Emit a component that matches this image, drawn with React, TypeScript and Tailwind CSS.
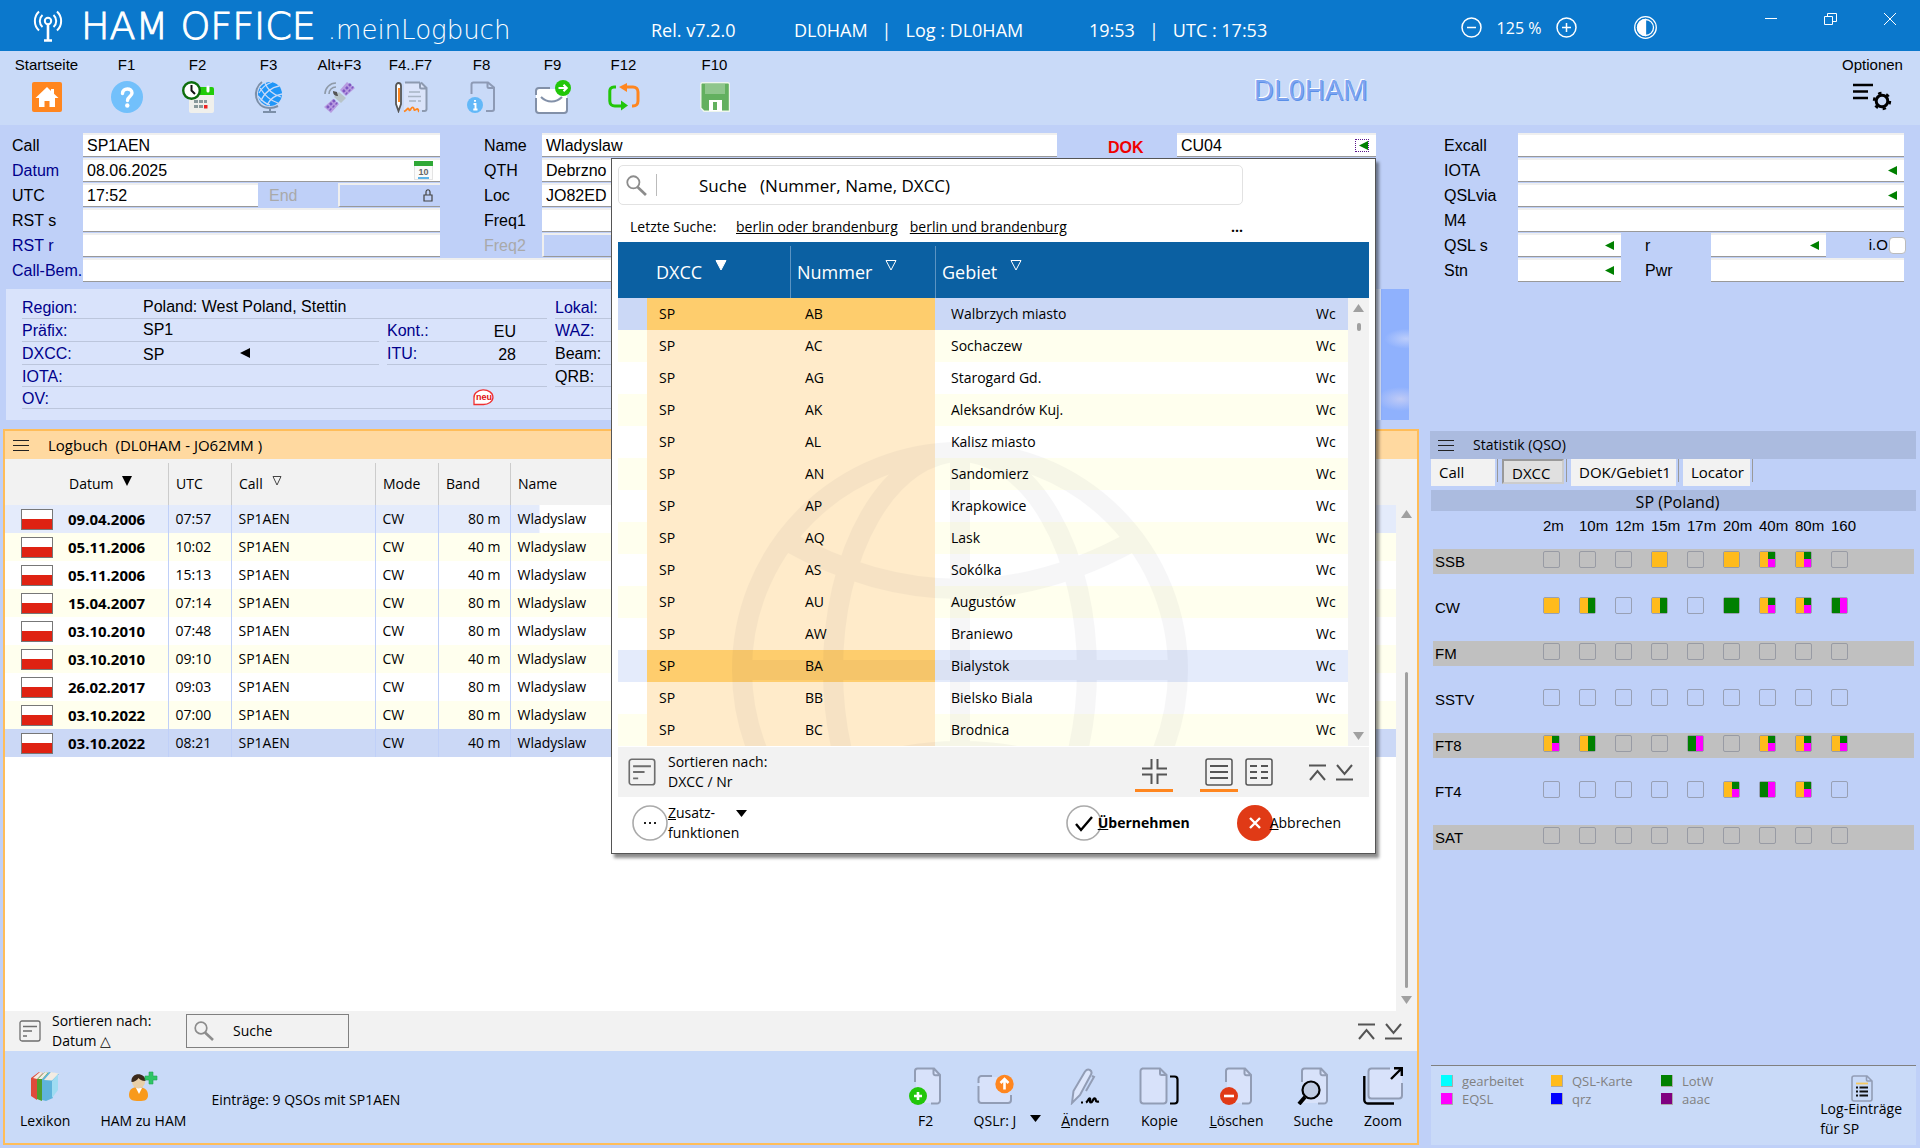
import React from "react";
import clsx from "clsx";

const UI_FONT = "font-['Open_Sans',sans-serif]";
const FORM_FONT = "font-['Liberation_Sans',sans-serif]";

/* ---------- icons ---------- */

function AntennaIcon() {
  return (
    <svg width="30" height="32" viewBox="0 0 30 32" fill="none" stroke="#fff" strokeWidth="2">
      <circle cx="15" cy="11" r="3.2" />
      <path d="M15 14v16M11 30.5h8" strokeWidth="2.6" />
      <path d="M9.5 17a8 8 0 010-12M20.500 17a8 8 0 000-12M6 20.500a13 13 0 010-19M24 20.500a13 13 0 000-19" />
    </svg>
  );
}

function HomeIcon() {
  return (
    <svg width="32" height="32" viewBox="0 0 32 32">
      <rect x="1" y="1" width="30" height="30" rx="2" fill="#ff861f" />
      <path d="M16 6L4.500 17h3.500v9h5.500v-6h5v6H24v-9h3.500L23 12.700V8h-3v2z" fill="#fff" />
    </svg>
  );
}

function HelpIcon() {
  return (
    <svg width="32" height="32" viewBox="0 0 32 32">
      <circle cx="16" cy="16" r="16" fill="#72c0fb" />
      <path d="M11.500 12.500c0-6 9.500-6 9.500-.5 0 3.500-4.500 3.500-4.500 7.500" fill="none" stroke="#fff" strokeWidth="3.400" strokeLinecap="round" />
      <circle cx="16.300" cy="24.500" r="2.200" fill="#fff" />
    </svg>
  );
}

function CalendarClockIcon() {
  return (
    <svg width="32" height="32" viewBox="0 0 32 32">
      <rect x="7" y="12" width="25" height="20" rx="2" fill="#f0f0ec" />
      <path d="M14 6h16a2 2 0 012 2v6H14z" fill="#22cc0a" />
      <path d="M26 6v4" stroke="#fff" strokeWidth="3" strokeLinecap="round" />
      <g fill="#8a9a9c">
        <path d="M12 19h4v3h-4zM17 19h4v3h-4zM22 19h3v3h-3zM12 24h4v3h-4zM17 24h4v3h-4z" />
      </g>
      <path d="M22 24h3.500v3.500H22z" fill="#ee2222" />
      <circle cx="9.500" cy="9.500" r="8.300" fill="#fff" stroke="#0d6e0d" strokeWidth="2.400" />
      <path d="M9.500 4v5.500l3.500 3.500" stroke="#111" strokeWidth="2" fill="none" />
    </svg>
  );
}

function GlobeIcon() {
  return (
    <svg width="30" height="32" viewBox="0 0 30 32" fill="none">
      <circle cx="16" cy="13" r="12" fill="#2096f8" />
      <path d="M6 7c5 8 11 13 18 15M11 2c3 8 9 12 16 14M4 15c4 5 8 8 12 9M25 5C18 6 10 12 7 20M28 13c-6 1-12 5-15 11M18 1C13 3 8 6 5 12" stroke="#c9daf8" strokeWidth="1.300" />
      <path d="M8 1C-2 8 0 27 16 27c4 0 6-1 8-2M16 27v3M9 31h13" stroke="#7c8fa8" strokeWidth="2" />
    </svg>
  );
}

function SatelliteIcon() {
  return (
    <svg width="34" height="32" viewBox="0 0 34 32">
      <path d="M24 1l8 6-9 8-6-6zM10 18l6 5-8 9-7-6z" fill="#b79be0" />
      <path d="M20 9l4 4M23 6l4 4M26 3l4 4M4 25l4 4M7 22l4 4M10 19l4 4" stroke="#7e57c2" strokeWidth="2.600" strokeDasharray="2.600 1.600" />
      <path d="M16 11l7 6-5 5-7-6z" fill="#b8c4c8" />
      <path d="M10 10c0 4 2 5 5 5l-1-4z" fill="#555" />
      <path d="M2 13C2 7 7 2 13 2M6 13c0-4 3-7 7-7" stroke="#8f9aa8" strokeWidth="1.600" fill="none" />
    </svg>
  );
}

function ContractIcon() {
  return (
    <svg width="34" height="32" viewBox="0 0 34 32" fill="none">
      <path d="M10 2h17l6 6v21H10z" fill="#dbe4fa" />
      <path d="M11 1.500h15M27 1.500l5.500 5.500v21a2 2 0 01-2 2H28M26 1.500V6a1.500 1.500 0 001.500 1.500h5" stroke="#8d9ab0" strokeWidth="2" />
      <path d="M15 11h11M14 15.500h13M15 20h7M24 20h3" stroke="#a8b4c4" strokeWidth="1.600" />
      <path d="M2 5c0-4 5-4 5 0v18l-2.500 7L2 23z" fill="#fff" stroke="#555" strokeWidth="1.800" />
      <path d="M5 7v14" stroke="#ff861f" strokeWidth="2" />
      <path d="M10 30.500c3-1 4-5 5-2s2-3 4-2 0 4 3 2 2 2 3 2" stroke="#ff861f" strokeWidth="1.800" />
    </svg>
  );
}

function DocShape({ children }: { children?: React.ReactNode }) {
  return (
    <svg width="34" height="38" viewBox="0 0 34 38" fill="none">
      <path d="M7 2h18l6 7v27H7z" fill="#d8e2fa" />
      <path d="M6 15V4a2.500 2.500 0 012.500-2.500H25l6 6.500v25.500a3 3 0 01-3 3h-6M24.500 2v4.500A1.800 1.800 0 0026.300 8.300H31" stroke="#929db5" strokeWidth="2" />
      {children}
    </svg>
  );
}

function InfoDocIcon() {
  return (
    <svg width="30" height="32" viewBox="0 0 30 32" fill="none">
      <path d="M4.500 13V3.500a2 2 0 012-2H21l6 5v21.500a2 2 0 01-2 2h-6M20.500 2v3.500A1.500 1.500 0 0022 7h5" stroke="#8d9ab5" strokeWidth="2" />
      <circle cx="8" cy="24" r="8" fill="#62b8f8" />
      <path d="M8 19v1.800M6.500 23H8.500v5.500M6.300 28.500h4.200" stroke="#fff" strokeWidth="1.900" />
    </svg>
  );
}

function MailIcon() {
  return (
    <svg width="38" height="34" viewBox="0 0 38 34" fill="none">
      <rect x="2" y="9" width="31" height="24" rx="3" fill="#fff" />
      <path d="M2 15v-4a3 3 0 013-3h11M2 18v12a3 3 0 003 3h25a3 3 0 003-3V18" stroke="#8290a8" strokeWidth="2" />
      <path d="M7 17c6 6 15 6 21 0" stroke="#8290a8" strokeWidth="2" />
      <circle cx="29" cy="8" r="8" fill="#22c60a" />
      <path d="M24.500 8h8M29.500 4.800L32.800 8l-3.300 3.200" stroke="#fff" strokeWidth="2" />
    </svg>
  );
}

function SyncIcon() {
  return (
    <svg width="32" height="28" viewBox="0 0 32 28" fill="none" strokeWidth="3">
      <path d="M8 4H6C3 4 1.800 6 1.800 8v10c0 3 2 5 5 5h8" stroke="#22c60a" />
      <path d="M24 23h1c3 0 5-2 5-5V9c0-3-2-5-5-5h-8" stroke="#ff861f" />
      <path d="M13 17.500v10l7-5z" fill="#22c60a" />
      <path d="M19 0v9l-8-5z" fill="#ff861f" />
    </svg>
  );
}

function SaveIcon() {
  return (
    <svg width="30" height="30" viewBox="0 0 30 30">
      <path d="M2 .8h26a1.500 1.500 0 011.500 1.500v27H4L.8 26V2.300A1.500 1.500 0 012 .8z" fill="#63b05f" stroke="#eef6ee" strokeWidth="1.400" />
      <path d="M5 2h20v10H5z" fill="#8fc68c" />
      <path d="M9 18h13v11H9z" fill="#fff" />
      <path d="M13 20h4v8h-4z" fill="#63b05f" />
    </svg>
  );
}

function OptionsIcon() {
  return (
    <svg width="42" height="30" viewBox="0 0 42 30" fill="none" stroke="#000">
      <path d="M1 3h20M1 9.500h15M1 16h15" strokeWidth="2.400" />
      <circle cx="30" cy="19" r="5.800" strokeWidth="3" />
      <circle cx="30" cy="19" r="8" strokeWidth="2.400" strokeDasharray="3.400 4.980" />
    </svg>
  );
}

function SearchIcon({ size = 20 }: { size?: number }) {
  return (
    <svg width={size} height={size} viewBox="0 0 20 20" fill="none" stroke="#8c8c8c">
      <circle cx="7" cy="7" r="5.800" strokeWidth="1.700" />
      <path d="M11 11.500l8 7.500" strokeWidth="2.600" />
    </svg>
  );
}

function SortIcon({ size = 22 }: { size?: number }) {
  return (
    <svg width={size} height={size} viewBox="0 0 22 22" fill="none" stroke="#6e6e6e" strokeWidth="1.300">
      <rect x="1" y="1" width="20" height="20" rx="2" />
      <path d="M4 6.500h14M4 11h9M4 16h4" strokeWidth="1.500" />
    </svg>
  );
}

function ToTopIcon() {
  return (
    <svg width="17" height="17" viewBox="0 0 17 17" fill="none" stroke="#555" strokeWidth="2">
      <path d="M0 1.500h17M1 16l7.500-9L16 16" />
    </svg>
  );
}

function ToBottomIcon() {
  return (
    <svg width="17" height="17" viewBox="0 0 17 17" fill="none" stroke="#555" strokeWidth="2">
      <path d="M0 15.500h17M1 1l7.500 9L16 1" />
    </svg>
  );
}

function Hamburger() {
  return (
    <svg width="16" height="11" viewBox="0 0 16 11" stroke="#222" strokeWidth="1">
      <path d="M0 .5h16M0 5.500h16M0 10.500h16" />
    </svg>
  );
}

function GreenArrow() {
  return (
    <svg width="9" height="9" viewBox="0 0 9 9">
      <path d="M9 0v9L0 4.500z" fill="#008000" />
    </svg>
  );
}

function BooksIcon() {
  return (
    <svg width="30" height="30" viewBox="0 0 30 30">
      <path d="M1 7l8-6 4 1-6 6v21l-6-4z" fill="#e04a3a" />
      <path d="M7 8l8-7 4 1-7 6v22l-5-2z" fill="#4f9e2f" />
      <path d="M12 8l7-7 10 2-6 7v17l-7 3-4-1z" fill="#5fb4dc" />
      <path d="M3 7l7-6 3 .5-6 6.500zM8 8l7-7 3 .5-6 6.500zM14 9l7-8 8 1.500-7 7z" fill="#f2ebe2" />
      <path d="M22 10l6-7v16l-6 8z" fill="#9fdcf2" />
    </svg>
  );
}

function UserAddIcon() {
  return (
    <svg width="30" height="30" viewBox="0 0 30 30">
      <path d="M1 24c0-6 4-8 9-8s10 2 10 8c0 5-3 6-9 6S1 29 1 24z" fill="#f89a1c" />
      <path d="M8 17l3 6 3-6z" fill="#fff" />
      <circle cx="10.500" cy="11" r="6.500" fill="#e8cfa8" />
      <path d="M3.500 11c-1-10 14-10 14-1-4 0-6-2-7-3-1 2-4 4-7 4z" fill="#3b2a1c" />
      <path d="M21 1h4v4h4v4h-4v4h-4V9h-4V5h4z" fill="#2fc565" stroke="#22a552" strokeWidth=".6" />
    </svg>
  );
}

function QslIcon() {
  return (
    <svg width="38" height="38" viewBox="0 0 38 38" fill="none">
      <rect x="3" y="10" width="31" height="26" rx="2" fill="#d8e2fa" />
      <path d="M2.500 16v-4a3 3 0 013-3H16M2.500 19v14a3 3 0 003 3H32a3 3 0 003-3v-5" stroke="#929db5" strokeWidth="2" />
      <circle cx="28.500" cy="17" r="9.200" fill="#ff861f" />
      <path d="M28.500 22.500V12.500M24.500 16l4-4 4 4" stroke="#fff" strokeWidth="2.600" />
    </svg>
  );
}

function PenIcon() {
  return (
    <svg width="32" height="38" viewBox="0 0 32 38" fill="none">
      <path d="M3 36l1.500-12L16 4.500c3-4 8-1 6 3L11 28z" fill="#dde6fb" stroke="#929db5" strokeWidth="2" />
      <path d="M23 9l2 1-8 14" stroke="#929db5" strokeWidth="2" />
      <path d="M12 35.500h2M17 35.500c2-1 3-5 4-4s-1 4 1 4 2-5 4-4-1 4 4 3" stroke="#000" strokeWidth="2.200" />
    </svg>
  );
}

function CopyIcon() {
  return (
    <svg width="40" height="38" viewBox="0 0 40 38" fill="none">
      <path d="M3 1.500h18l6.500 6.500v25.500a3 3 0 01-3 3h-20a3 3 0 01-3-3V4A2.500 2.500 0 014 1.500zM21 2v4.500A1.500 1.500 0 0022.500 8h5" fill="#d8e2fa" stroke="#929db5" strokeWidth="2" />
      <path d="M31 9.500h4.500a3 3 0 013 3v21a3 3 0 01-3 3H31" stroke="#000" strokeWidth="2.200" />
    </svg>
  );
}

function ZoomWindowIcon() {
  return (
    <svg width="40" height="38" viewBox="0 0 40 38" fill="none">
      <rect x="6" y="2" width="33" height="30" rx="3" fill="#d8e2fa" />
      <path d="M27 1.500H8.500a3 3 0 00-3 3v24a3 3 0 003 3H36a3 3 0 003-3V16" stroke="#929db5" strokeWidth="2" />
      <path d="M1.300 9v24a3.500 3.500 0 003.500 3.500H31M28 12L38.500 1.500M31 1.300h7.800V9" stroke="#000" strokeWidth="2.400" />
    </svg>
  );
}

/* ---------- title bar ---------- */

function TitleBar() {
  return (
    <header className="flex h-[51px] shrink-0 items-center bg-[#0b78cc] pl-[33px] text-white">
      <AntennaIcon />
      <h1 className="ml-[18px] flex w-[570px] items-baseline whitespace-nowrap pt-[4px] font-['DejaVu_Sans',sans-serif] font-extralight">
        <span className="text-[38px] leading-[40px] [-webkit-text-stroke:1px_#ffffff]">HAM OFFICE</span>
        <span className="ml-[12px] text-[26px] leading-[40px]">.meinLogbuch</span>
      </h1>
      <div className="flex flex-1 items-center whitespace-pre pt-[8px] text-[18px] leading-6">
        <span className="w-[143px]">Rel. v7.2.0</span>
        <span className="w-[295px]">DL0HAM   |   Log : DL0HAM</span>
        <span>19:53   |   UTC : 17:53</span>
      </div>
      <div className="flex items-center pt-[4px]">
        <button type="button" aria-label="Verkleinern">
          <svg width="21" height="21" viewBox="0 0 21 21" fill="none" stroke="#fff" strokeWidth="1.500">
            <circle cx="10.500" cy="10.500" r="9.500" />
            <path d="M6 10.500h9" />
          </svg>
        </button>
        <span className="w-[74px] text-center text-[16px] leading-5">125 %</span>
        <button type="button" aria-label="Vergrößern">
          <svg width="21" height="21" viewBox="0 0 21 21" fill="none" stroke="#fff" strokeWidth="1.500">
            <circle cx="10.500" cy="10.500" r="9.500" />
            <path d="M6 10.500h9M10.500 6v9" />
          </svg>
        </button>
        <button type="button" aria-label="Kontrast" className="ml-[57px]">
          <svg width="23" height="23" viewBox="0 0 23 23" fill="none" stroke="#fff" strokeWidth="1.300">
            <circle cx="11.500" cy="11.500" r="10.800" />
            <circle cx="11.500" cy="11.500" r="8" />
            <path d="M11.500 3.500a8 8 0 000 16z" fill="#fff" />
          </svg>
        </button>
      </div>
      <div className="ml-[108px] flex w-[155px] items-start gap-[47px] self-start pt-[13px]">
        <button type="button" aria-label="Minimieren">
          <svg width="12" height="12" viewBox="0 0 12 12" stroke="#fff"><path d="M0 5.500h12" /></svg>
        </button>
        <button type="button" aria-label="Fenster">
          <svg width="13" height="12" viewBox="0 0 13 12" fill="none" stroke="#fff">
            <path d="M.5 3.500h8v8h-8zM3.500 3.500v-3h9v8H8.500" />
          </svg>
        </button>
        <button type="button" aria-label="Schließen">
          <svg width="12" height="12" viewBox="0 0 12 12" stroke="#fff"><path d="M0 0l12 12M12 0L0 12" /></svg>
        </button>
      </div>
    </header>
  );
}

/* ---------- toolbar ---------- */

const TOOLS = [
  { label: "F1", icon: <HelpIcon /> },
  { label: "F2", icon: <CalendarClockIcon /> },
  { label: "F3", icon: <GlobeIcon /> },
  { label: "Alt+F3", icon: <SatelliteIcon /> },
  { label: "F4..F7", icon: <ContractIcon /> },
  { label: "F8", icon: <InfoDocIcon /> },
  { label: "F9", icon: <MailIcon /> },
  { label: "F12", icon: <SyncIcon /> },
];

function Tool({ label, children }: { label: string; children: React.ReactNode }) {
  return (
    <button type="button" className="flex w-[71px] flex-col items-center">
      <span className="text-[15px] leading-[18px]">{label}</span>
      <span className="mt-[5px] flex h-[36px] items-center">{children}</span>
    </button>
  );
}

function Toolbar() {
  return (
    <nav className={clsx("flex h-[74px] shrink-0 items-start bg-[#c9daf8] pl-[11px] pr-[12px] pt-[5px]", FORM_FONT)}>
      <Tool label="Startseite"><HomeIcon /></Tool>
      <div className="ml-[9px] flex">
        {TOOLS.map((t) => (
          <Tool key={t.label} label={t.label}>{t.icon}</Tool>
        ))}
      </div>
      <div className="ml-[20px]">
        <Tool label="F10"><SaveIcon /></Tool>
      </div>
      <div className={clsx("flex flex-1 justify-end pr-[469px] pt-[11px] text-[28px] leading-[44px] text-[#7da4f0] [text-shadow:-1px_-1px_0_#ffffff,1px_1px_0_#5b8fe8]", UI_FONT)}>
        DL0HAM
      </div>
      <Tool label="Optionen"><OptionsIcon /></Tool>
    </nav>
  );
}

/* ---------- QSO form ---------- */

interface FieldProps {
  id: string;
  value?: string;
  arrow?: boolean;
  focused?: boolean;
  disabled?: boolean;
  className?: string;
  children?: React.ReactNode;
}

function Field({ id, value = "", arrow, focused, disabled, className, children }: FieldProps) {
  return (
    <div
      className={clsx(
        "flex h-[24px] items-center border-b border-t-2 border-b-[#999] border-t-[#efefef] pl-[4px] pr-[7px]",
        disabled ? "border-l-2 border-l-[#efefef] bg-[#bfd0f8]" : "bg-white",
        className
      )}
    >
      <input
        id={id}
        defaultValue={value}
        disabled={disabled}
        className="h-[20px] w-0 min-w-0 flex-1 bg-transparent text-[16px] leading-5 outline-none"
      />
      {arrow && (
        <button
          type="button"
          aria-label="Auswahl"
          className={clsx("flex h-[13px] w-[14px] items-center justify-end", focused && "border border-dotted border-purple-900")}
        >
          <GreenArrow />
        </button>
      )}
      {children}
    </div>
  );
}

function Label({ htmlFor, className, children }: { htmlFor: string; className?: string; children: React.ReactNode }) {
  return (
    <label htmlFor={htmlFor} className={clsx("whitespace-nowrap text-[16px] leading-[25px]", className)}>
      {children}
    </label>
  );
}

function QsoForm() {
  return (
    <form className={clsx("flex shrink-0 pt-[8px]", FORM_FONT)}>
      <div className="grid flex-1 grid-cols-[71px_357px_102px_1fr_120px_199px] grid-rows-[repeat(6,24px)] gap-y-px pl-[12px]">
        <Label htmlFor="call">Call</Label>
        <Field id="call" value="SP1AEN" />
        <Label htmlFor="name" className="pl-[44px]">Name</Label>
        <Field id="name" value="Wladyslaw" />
        <Label htmlFor="dok" className="pl-[51px] pt-[2px] font-bold text-[#f00000]">DOK</Label>
        <Field id="dok" value="CU04" arrow focused />

        <Label htmlFor="datum" className="text-[#00008b]">Datum</Label>
        <Field id="datum" value="08.06.2025">
          <svg width="19" height="19" viewBox="0 0 19 19">
            <rect x=".5" y=".5" width="18" height="18" fill="#fbfbfb" stroke="#e4e4e4" />
            <path d="M0 0h19v5H0z" fill="#2fa836" />
            <path d="M4 17h11" stroke="#2a9de0" strokeWidth="1.500" />
            <text x="9.500" y="14" fontSize="9" fontWeight="bold" textAnchor="middle" fill="#666">10</text>
          </svg>
        </Field>
        <Label htmlFor="qth" className="pl-[44px]">QTH</Label>
        <Field id="qth" value="Debrzno" />
        <span className="col-span-2" />

        <Label htmlFor="utc">UTC</Label>
        <div className="flex">
          <Field id="utc" value="17:52" className="w-[175px]" />
          <Label htmlFor="end" className="flex-1 pl-[11px] text-[#a9a9a9]">End</Label>
          <Field id="end" disabled className="w-[102px]">
            <svg width="10" height="13" viewBox="0 0 10 13" fill="none" stroke="#444" strokeWidth="1.200">
              <path d="M1 6h8v6H1zM3 6V3c0-3 4-3 4 0v3" />
            </svg>
          </Field>
        </div>
        <Label htmlFor="loc" className="pl-[44px]">Loc</Label>
        <Field id="loc" value="JO82ED" />
        <span className="col-span-2" />

        <Label htmlFor="rsts">RST s</Label>
        <Field id="rsts" />
        <Label htmlFor="freq1" className="pl-[44px]">Freq1</Label>
        <Field id="freq1" />
        <span className="col-span-2" />

        <Label htmlFor="rstr" className="text-[#00008b]">RST r</Label>
        <Field id="rstr" />
        <Label htmlFor="freq2" className="pl-[44px] text-[#a9a9a9]">Freq2</Label>
        <Field id="freq2" disabled />
        <span className="col-span-2" />

        <Label htmlFor="bem" className="text-[#00008b]">Call-Bem.</Label>
        <Field id="bem" className="col-span-5" />
      </div>

      <div className="grid w-[544px] grid-cols-[74px_103px_24px_66px_1fr_78px] grid-rows-[repeat(6,24px)] gap-y-px pl-[68px] pr-[16px]">
        <Label htmlFor="excall">Excall</Label>
        <Field id="excall" className="col-span-5" />
        <Label htmlFor="iota">IOTA</Label>
        <Field id="iota" arrow className="col-span-5" />
        <Label htmlFor="qslvia">QSLvia</Label>
        <Field id="qslvia" arrow className="col-span-5" />
        <Label htmlFor="m4">M4</Label>
        <Field id="m4" className="col-span-5" />
        <Label htmlFor="qsls">QSL s</Label>
        <Field id="qsls" arrow />
        <Label htmlFor="qslr" className="col-start-4">r</Label>
        <Field id="qslr" arrow />
        <div className="flex items-center justify-end">
          <label htmlFor="io" className="text-[15px] leading-5">i.O.</label>
          <input id="io" type="checkbox" className="-ml-[3px] -mr-[2px] h-[17px] w-[17px] appearance-none rounded-[4px] border border-[#bbb] bg-white" />
        </div>
        <Label htmlFor="stn">Stn</Label>
        <Field id="stn" arrow />
        <Label htmlFor="pwr" className="col-start-4">Pwr</Label>
        <Field id="pwr" className="col-span-2" />
      </div>
    </form>
  );
}

/* ---------- region info ---------- */

function InfoCell({ label, value, dark, tall, end, className, children }: {
  label: string;
  value?: string;
  dark?: boolean;
  tall?: boolean;
  end?: boolean;
  className?: string;
  children?: React.ReactNode;
}) {
  return (
    <div className={clsx("flex items-center border-b border-[#bcc6dc]", tall ? "h-[23px]" : "h-[22px]", className)}>
      <dt className={clsx("w-[121px] shrink-0 pt-[2px]", dark ? "text-black" : "text-[#00008b]")}>{label}</dt>
      {value && <dd className={clsx(end && "-ml-[121px] flex-1 pr-[31px] pt-[4px] text-right")}>{value}</dd>}
      {children}
    </div>
  );
}

function RegionInfo() {
  return (
    <section className="mt-[7px] flex h-[131px] shrink-0 pl-[6px]">
      <dl className={clsx("grid flex-1 grid-cols-[357px_160px_1fr] content-start gap-x-2 bg-[#d9e3fb] pl-[16px] pr-[8px] pt-[7px] text-[16px] leading-5", FORM_FONT)}>
        <InfoCell tall label="Region:" value="Poland: West Poland, Stettin" className="col-span-2" />
        <InfoCell tall label="Lokal:" />
        <InfoCell tall label="Präfix:" value="SP1" />
        <InfoCell tall label="Kont.:" value="EU" end />
        <InfoCell tall label="WAZ:" />
        <InfoCell tall label="DXCC:">
          <dd className="w-[97px] pt-[4px]">SP</dd>
          <svg width="10" height="10" viewBox="0 0 10 10"><path d="M10 0v10L0 5z" /></svg>
        </InfoCell>
        <InfoCell tall label="ITU:" value="28" end />
        <InfoCell tall label="Beam:" dark />
        <InfoCell label="IOTA:" className="col-span-2" />
        <InfoCell label="QRB:" dark />
        <InfoCell label="OV:" className="col-span-3">
          <svg className="ml-[329px]" width="23" height="17" viewBox="0 0 23 17">
            <path d="M2 15.500V9a9.500 7.300 0 119 6.500z" fill="#fff" stroke="#f03030" strokeWidth="1.300" />
            <text x="12" y="11" fontSize="9" fontWeight="bold" textAnchor="middle" fill="#e01010">neu</text>
          </svg>
        </InfoCell>
      </dl>
      <div className="w-[28px] bg-[radial-gradient(22px_10px_at_90%_38%,#bccdfb,transparent),radial-gradient(24px_12px_at_70%_84%,#bfcaf6,transparent),linear-gradient(#8fb1fd,#8fb1fd)]" />
      <div className="w-[511px]" />
    </section>
  );
}

/* ---------- logbook ---------- */

const LOG_ROWS = [
  ["09.04.2006", "07:57", "80 m"],
  ["05.11.2006", "10:02", "40 m"],
  ["05.11.2006", "15:13", "40 m"],
  ["15.04.2007", "07:14", "80 m"],
  ["03.10.2010", "07:48", "80 m"],
  ["03.10.2010", "09:10", "40 m"],
  ["26.02.2017", "09:03", "80 m"],
  ["03.10.2022", "07:00", "80 m"],
  ["03.10.2022", "08:21", "40 m"],
];

function PolishFlag() {
  return (
    <svg width="32" height="21" viewBox="0 0 32 21" className="ml-[16px] block">
      <rect x=".5" y=".5" width="31" height="20" fill="#fff" stroke="#777" />
      <path d="M1 10h30v10H1z" fill="#df2212" />
    </svg>
  );
}

function HeadCell({ children, className }: { children?: React.ReactNode; className?: string }) {
  return (
    <th scope="col" className="p-0 pt-[4px] text-left align-top font-normal">
      <div className={clsx("flex h-[42px] items-center gap-[9px] pl-[7px]", className)}>{children}</div>
    </th>
  );
}

function LogRow({ row, index }: { row: string[]; index: number }) {
  const first = index === 0;
  const last = index === LOG_ROWS.length - 1;
  const cell = "border-l border-[#c0d0f8] p-0 pl-[7px]";
  return (
    <tr
      className={clsx(
        "h-[28px]",
        first ? "bg-[#e4ebfb]" : last ? "bg-[#cbd8f6]" : index % 2 ? "bg-[#ffffee]" : "bg-white"
      )}
    >
      <td className="p-0"><PolishFlag /></td>
      <td className="p-0 pl-[6px] text-[15px] font-bold">{row[0]}</td>
      <td className={cell}>{row[1]}</td>
      <td className={cell}>SP1AEN</td>
      <td className={cell}>CW</td>
      <td className={clsx(cell, "pr-[9px] text-right")}>{row[2]}</td>
      <td className={clsx(cell, first && "bg-[linear-gradient(90deg,transparent_29px,#ffffff_29px,#ffffff_calc(100%-24px),transparent_calc(100%-24px))]")}>Wladyslaw</td>
    </tr>
  );
}

function BarButton({ icon, children }: { icon: React.ReactNode; children: React.ReactNode }) {
  return (
    <button type="button" className="flex flex-col items-center">
      <span className="flex h-[38px] items-center justify-center">{icon}</span>
      <span className="mt-[6px] whitespace-nowrap text-[14px] leading-5">{children}</span>
    </button>
  );
}

function Logbook() {
  return (
    <section className="flex flex-1 flex-col border-2 border-[#ffbd59]">
      <h2 className="flex h-[28px] items-center bg-[#ffd9a0] pl-[8px] text-[15px] leading-5">
        <Hamburger />
        <span className="ml-[19px] whitespace-pre">Logbuch  (DL0HAM - JO62MM )</span>
      </h2>
      <div className="flex flex-1 bg-white">
        <div className="flex-1">
          <table className="w-full table-fixed border-collapse text-[14px] leading-5">
            <colgroup>
              <col className="w-[57px]" />
              <col className="w-[106px]" />
              <col className="w-[63px]" />
              <col className="w-[144px]" />
              <col className="w-[63px]" />
              <col className="w-[72px]" />
              <col />
            </colgroup>
            <thead>
              <tr className="h-[46px] bg-[#f2f2f2]">
                <HeadCell />
                <HeadCell>
                  Datum
                  <svg className="-mt-[6px]" width="10" height="10" viewBox="0 0 10 10"><path d="M0 0h10L5 10z" /></svg>
                </HeadCell>
                <HeadCell className="border-l border-[#ccc]">UTC</HeadCell>
                <HeadCell className="border-l border-[#ccc]">
                  Call
                  <svg className="-mt-[6px]" width="10" height="10" viewBox="0 0 10 10" fill="none" stroke="#444"><path d="M1 .5h8L5 9z" /></svg>
                </HeadCell>
                <HeadCell className="border-l border-[#ccc]">Mode</HeadCell>
                <HeadCell className="border-l border-[#ccc]">Band</HeadCell>
                <HeadCell className="border-l border-[#ccc]">Name</HeadCell>
              </tr>
            </thead>
            <tbody>
              {LOG_ROWS.map((row, i) => (
                <LogRow key={i} row={row} index={i} />
              ))}
            </tbody>
          </table>
        </div>
        <div className="flex w-[21px] flex-col items-center bg-[#f2f2f2] pb-[7px] pt-[51px]">
          <svg width="11" height="8" viewBox="0 0 11 8"><path d="M5.500 0L11 8H0z" fill="#a0a0a0" /></svg>
          <div className="mb-[8px] mt-[154px] w-[3px] flex-1 rounded bg-[#a0a0a0]" />
          <svg width="11" height="8" viewBox="0 0 11 8"><path d="M5.500 8L11 0H0z" fill="#a0a0a0" /></svg>
        </div>
      </div>
      <div className="flex h-[40px] items-center bg-[#f2f2f2] pl-[14px] pr-[15px]">
        <SortIcon />
        <p className="ml-[11px] w-[134px] text-[14px] leading-5">
          Sortieren nach:
          <br />
          Datum △
        </p>
        <label className="flex h-[34px] w-[163px] items-center border border-[#808080] pl-[7px]">
          <SearchIcon />
          <input aria-label="Suche" defaultValue="Suche" className="ml-[19px] w-[100px] bg-transparent text-[14px] leading-5 outline-none" />
        </label>
        <div className="ml-auto flex gap-[10px]">
          <button type="button" aria-label="Zum Anfang"><ToTopIcon /></button>
          <button type="button" aria-label="Zum Ende"><ToBottomIcon /></button>
        </div>
      </div>
      <div className="flex h-[92px] items-start bg-[#c9daf8] pl-[15px] pr-[14px] pt-[16px]">
        <BarButton icon={<BooksIcon />}>Lexikon</BarButton>
        <div className="ml-[30px]">
          <BarButton icon={<UserAddIcon />}>HAM zu HAM</BarButton>
        </div>
        <p className="ml-[25px] mt-[23px] text-[14px] leading-5">Einträge: 9 QSOs mit SP1AEN</p>
        <div className="ml-auto flex">
          <BarButton
            icon={
              <DocShape>
                <circle cx="9" cy="29" r="9" fill="#22c60a" />
                <path d="M5 29h8M9 25v8" stroke="#fff" strokeWidth="2.600" />
              </DocShape>
            }
          >
            F2
          </BarButton>
          <div className="ml-[31px]">
            <BarButton icon={<QslIcon />}>QSLr: J</BarButton>
          </div>
          <button type="button" aria-label="QSLr Auswahl" className="ml-[14px] mt-[48px] self-start">
            <svg width="11" height="7" viewBox="0 0 11 7"><path d="M0 0h11L5.500 7z" /></svg>
          </button>
          <div className="ml-[20px] flex gap-[30px]">
            <BarButton icon={<PenIcon />}><u>Ä</u>ndern</BarButton>
            <BarButton icon={<CopyIcon />}>Kopie</BarButton>
            <BarButton
              icon={
                <DocShape>
                  <circle cx="9" cy="29" r="9" fill="#e03a16" />
                  <path d="M4 29h10" stroke="#fff" strokeWidth="2.600" />
                </DocShape>
              }
            >
              <u>L</u>öschen
            </BarButton>
            <BarButton
              icon={
                <DocShape>
                  <circle cx="15" cy="23" r="8.500" fill="#bfcbe2" stroke="#000" strokeWidth="2.200" />
                  <path d="M9 30l-6 7" stroke="#000" strokeWidth="4" />
                </DocShape>
              }
            >
              Suche
            </BarButton>
            <BarButton icon={<ZoomWindowIcon />}>Zoom</BarButton>
          </div>
        </div>
      </div>
    </section>
  );
}

/* ---------- statistics ---------- */

const BANDS = ["2m", "10m", "12m", "15m", "17m", "20m", "40m", "80m", "160"];

// q = QSL card, l = LotW, e = eQSL
const STATS: Record<string, string[]> = {
  SSB: ["", "", "", "q", "", "q", "qle", "qle", ""],
  CW: ["q", "ql", "", "ql", "", "l", "qle", "qle", "le"],
  FM: ["", "", "", "", "", "", "", "", ""],
  SSTV: ["", "", "", "", "", "", "", "", ""],
  FT8: ["qle", "ql", "", "", "le", "", "qle", "qle", "qle"],
  FT4: ["", "", "", "", "", "qle", "le", "qle", ""],
  SAT: ["", "", "", "", "", "", "", "", ""],
};

const LEGEND = [
  ["gearbeitet", "bg-[#00ffff]"],
  ["QSL-Karte", "bg-[#ffbb1c]"],
  ["LotW", "bg-[#008000]"],
  ["EQSL", "bg-[#ff00ff]"],
  ["qrz", "bg-[#0000ff]"],
  ["aaac", "bg-[#800080]"],
];

function StatBox({ kind }: { kind: string }) {
  return (
    <span className="flex h-[17px] w-[17px] rounded-[2px] border border-[#888c98]/70">
      {kind.startsWith("q") && <span className="flex-1 bg-[#ffbb1c]" />}
      {(kind === "ql" || kind === "l" || kind === "le") && <span className="flex-1 bg-[#008000]" />}
      {kind === "le" && <span className="flex-1 bg-[#ff00ff]" />}
      {kind === "qle" && (
        <span className="flex flex-1 flex-col">
          <span className="h-[7px] bg-[#008000]" />
          <span className="flex-1 bg-[#ff00ff]" />
        </span>
      )}
    </span>
  );
}

function Tab({ children, active, className }: { children: React.ReactNode; active?: boolean; className?: string }) {
  return (
    <div className="flex h-[23px] items-start border-r border-[#999] pr-[2px]">
      <button
        type="button"
        className={clsx(
          "flex items-start whitespace-nowrap px-[8px] text-left text-[15px] leading-5",
          active
            ? "h-[25px] border-2 border-b-[#ccc] border-l-[#999] border-r-[#ccc] border-t-[#999] bg-[#e0e0e0] px-[6px] pt-[2px]"
            : "h-[27px] bg-[#f2f2f2] pt-[3px]",
          className
        )}
      >
        {children}
      </button>
    </div>
  );
}

function Statistics() {
  return (
    <section className="flex w-[486px] flex-col pt-[2px]">
      <h2 className="flex h-[28px] items-center bg-[#abbbdf] pl-[8px] text-[14px] leading-5">
        <Hamburger />
        <span className="ml-[19px]">Statistik (QSO)</span>
      </h2>
      <div className="flex h-[31px] items-start gap-[4px] pl-px">
        <Tab className="w-[64px]">Call</Tab>
        <Tab active className="w-[62px]">DXCC</Tab>
        <Tab className="w-[105px]">DOK/Gebiet1</Tab>
        <Tab className="w-[67px]">Locator</Tab>
      </div>
      <h3 className="ml-px flex h-[21px] items-center justify-center bg-[#abbbdf] pl-[8px] pt-[2px] text-[16px] leading-5">SP (Poland)</h3>
      <table className="ml-[3px] table-fixed border-collapse text-[15px] leading-5">
        <colgroup>
          <col className="w-[110px]" />
          {BANDS.map((b) => (
            <col key={b} className="w-[36px]" />
          ))}
          <col />
        </colgroup>
        <thead>
          <tr className={clsx("h-[38px]", FORM_FONT)}>
            <th />
            {BANDS.map((b) => (
              <th key={b} scope="col" className="whitespace-nowrap p-0 pt-[5px] text-left align-top font-normal">{b}</th>
            ))}
            <th />
          </tr>
        </thead>
        <tbody>
          {Object.entries(STATS).map(([mode, cells], i) => {
            const bar = clsx("h-[25px]", i % 2 === 0 && "bg-[#c0c0c0]");
            return (
              <tr key={mode} className="h-[46px]">
                <th scope="row" className={clsx("p-0 text-left align-top font-normal", FORM_FONT)}>
                  <div className={clsx(bar, "pl-[2px] pt-[3px]")}>{mode}</div>
                </th>
                {cells.map((kind, j) => (
                  <td key={j} className="p-0 align-top">
                    <div className={clsx(bar, "pt-[2px]")}><StatBox kind={kind} /></div>
                  </td>
                ))}
                <td className="p-0 align-top"><div className={clsx(bar, "mr-[2px]")} /></td>
              </tr>
            );
          })}
        </tbody>
      </table>
      <div className="ml-px mt-auto flex h-[80px] items-start justify-between border-t border-[#808080] bg-[#c9daf8] pl-[10px] pr-[14px] pt-[6px]">
        <ul className="grid grid-cols-[110px_110px_110px] text-[13px] leading-[18px] text-[#808080]">
          {LEGEND.map(([name, color]) => (
            <li key={name} className="flex items-center gap-[9px]">
              <span className={clsx("h-[12px] w-[12px] border-b border-r border-[#aaa]", color)} />
              {name}
            </li>
          ))}
        </ul>
        <button type="button" className="flex flex-col items-start pt-[3px] text-left text-[14px] leading-5">
          <svg className="ml-[31px]" width="22" height="27" viewBox="0 0 22 27" fill="none">
            <path d="M3 1h13l5 5v18a2 2 0 01-2 2H3a2 2 0 01-2-2V3a2 2 0 012-2zM15.500 1v4a1 1 0 001 1H21" stroke="#929db5" strokeWidth="1.600" />
            <path d="M5 8.500h12" stroke="#f4c860" strokeWidth="1.800" />
            <path d="M5 12.500h2M8.500 12.500H17M5 16.500h2M8.500 16.500H17M5 20.500h2M8.500 20.500H17" stroke="#111" strokeWidth="2" />
          </svg>
          <span className="-mt-[3px] whitespace-nowrap">
            Log-Einträge
            <br />
            für SP
          </span>
        </button>
      </div>
    </section>
  );
}

/* ---------- area picker ---------- */

const AREAS = [
  ["AB", "Walbrzych miasto"],
  ["AC", "Sochaczew"],
  ["AG", "Starogard Gd."],
  ["AK", "Aleksandrów Kuj."],
  ["AL", "Kalisz miasto"],
  ["AN", "Sandomierz"],
  ["AP", "Krapkowice"],
  ["AQ", "Lask"],
  ["AS", "Sokólka"],
  ["AU", "Augustów"],
  ["AW", "Braniewo"],
  ["BA", "Bialystok"],
  ["BB", "Bielsko Biala"],
  ["BC", "Brodnica"],
];

function areaRowColor(code: string, index: number) {
  if (index === 0) return "bg-[#cbd8f6]";
  if (code === "BA") return "bg-[#e4ebfb]";
  return index % 2 ? "bg-[#ffffee]" : "bg-white";
}

function GlobeWatermark() {
  return (
    <svg
      className="pointer-events-none absolute bottom-0 left-0"
      width="730"
      height="448"
      viewBox="618 298 730 448"
      fill="none"
      stroke="#000030"
      strokeWidth="20"
      opacity="0.03"
    >
      <circle cx="960" cy="670" r="218" />
      <ellipse cx="960" cy="670" rx="127" ry="218" />
      <path d="M960 452v436M742 670h436M785 540Q960 638 1135 540M785 800Q960 702 1135 800" />
    </svg>
  );
}

function SortMark({ filled }: { filled?: boolean }) {
  return (
    <svg className="-mt-[14px]" width="12" height="11" viewBox="0 0 12 11" fill={filled ? "#fff" : "none"} stroke="#fff">
      <path d="M1 .5h10L6 10z" />
    </svg>
  );
}

function AreaDialog() {
  const head = "p-0 pt-[4px] text-left align-top font-normal";
  const headInner = "flex h-[52px] items-center gap-[13px] border-l pl-[6px]";
  return (
    <div
      role="dialog"
      aria-label="Gebiet auswählen"
      className="absolute left-[611px] top-[158px] flex h-[696px] w-[765px] flex-col border border-[#555] bg-white px-[6px] pt-[6px] shadow-[3px_4px_3px_rgba(0,0,0,0.45)]"
    >
      <label className="flex h-[40px] w-[625px] shrink-0 items-center rounded-[5px] border border-[#e2e2e2] pl-[7px]">
        <SearchIcon size={21} />
        <span className="ml-[9px] h-[22px] w-px bg-[#bbb]" />
        <input
          aria-label="Suche"
          defaultValue="Suche   (Nummer, Name, DXCC)"
          className="ml-[42px] mt-[2px] flex-1 bg-transparent text-[17px] leading-6 outline-none"
        />
      </label>
      <div className="flex h-[37px] w-[625px] shrink-0 items-center pl-[12px] pt-[7px] text-[14px] leading-5">
        <span className="w-[106px]">Letzte Suche:</span>
        <a href="#oder" className="underline">berlin oder brandenburg</a>
        <a href="#und" className="ml-[12px] underline">berlin und brandenburg</a>
        <button type="button" aria-label="Mehr" className="ml-auto font-bold">...</button>
      </div>
      <div className="relative flex h-[504px] shrink-0">
        <table className="flex-1 table-fixed border-collapse text-[14px] leading-5">
          <colgroup>
            <col className="w-[29px]" />
            <col className="w-[143px]" />
            <col className="w-[145px]" />
            <col />
            <col className="w-[32px]" />
          </colgroup>
          <thead>
            <tr className="h-[56px] bg-[#0b60a2] text-[18px] leading-6 text-white">
              <th className={head} />
              <th scope="col" className={head}><div className={clsx(headInner, "border-transparent pl-[8px]")}>DXCC<SortMark filled /></div></th>
              <th scope="col" className={head}><div className={clsx(headInner, "border-[#5b93c2]")}>Nummer<SortMark /></div></th>
              <th scope="col" className={head}><div className={clsx(headInner, "border-[#5b93c2]")}>Gebiet<SortMark /></div></th>
              <th className={head} />
            </tr>
          </thead>
          <tbody>
            {AREAS.map(([code, name], i) => {
              const key = clsx("p-0", i === 0 || code === "BA" ? "bg-[#fecd6d]" : "bg-[#ffebca]");
              return (
                <tr key={code} className={clsx("h-[32px]", areaRowColor(code, i))}>
                  <td className="p-0" />
                  <td className={clsx(key, "pl-[12px]")}>SP</td>
                  <td className={clsx(key, "pl-[15px]")}>{code}</td>
                  <td className="p-0 pl-[16px]">{name}</td>
                  <td className="p-0">Wc</td>
                </tr>
              );
            })}
          </tbody>
        </table>
        <div className="flex w-[21px] flex-col bg-[#f2f2f2]">
          <div className="h-[56px] bg-[#0b60a2]" />
          <div className="flex flex-1 flex-col items-center py-[6px]">
            <svg width="11" height="8" viewBox="0 0 11 8"><path d="M5.500 0L11 8H0z" fill="#a0a0a0" /></svg>
            <div className="mt-[11px] h-[8px] w-[4px] rounded bg-[#a0a0a0]" />
            <svg className="mt-auto" width="11" height="8" viewBox="0 0 11 8"><path d="M5.500 8L11 0H0z" fill="#a0a0a0" /></svg>
          </div>
        </div>
        <GlobeWatermark />
      </div>
      <div className="mt-px flex h-[50px] shrink-0 items-center bg-[#f2f2f2] pl-[10px] pr-[16px]">
        <SortIcon size={28} />
        <p className="ml-[12px] flex-1 text-[14px] leading-5">
          Sortieren nach:
          <br />
          DXCC / Nr
        </p>
        <button type="button" aria-label="Kompakt" className="mt-[2px] flex h-[38px] w-[38px] items-start justify-center border-b-[3px] border-[#ff861f] pt-[5px]">
          <svg width="25" height="25" viewBox="0 0 25 25" fill="none" stroke="#555" strokeWidth="2">
            <path d="M9.500 0v9.500H0M15.500 0v9.500H25M9.500 25v-9.500H0M15.500 25v-9.500H25" />
          </svg>
        </button>
        <button type="button" aria-label="Liste" className="ml-[27px] mt-[2px] flex h-[38px] w-[38px] items-start justify-center border-b-[3px] border-[#ff861f] pt-[4px]">
          <svg width="28" height="28" viewBox="0 0 28 28" fill="none" stroke="#555" strokeWidth="1.500">
            <rect x="1" y="1" width="26" height="26" rx="2" />
            <path d="M5 8h18M5 14h18M5 20h18" strokeWidth="2" />
          </svg>
        </button>
        <button type="button" aria-label="Spalten" className="ml-[7px] mt-[2px] flex h-[38px] items-start pt-[4px]">
          <svg width="28" height="28" viewBox="0 0 28 28" fill="none" stroke="#555" strokeWidth="1.500">
            <rect x="1" y="1" width="26" height="26" rx="2" />
            <path d="M5 8h7M16 8h7M5 14h7M16 14h7M5 20h7M16 20h7" strokeWidth="2" />
          </svg>
        </button>
        <button type="button" aria-label="Zum Anfang" className="ml-[36px]"><ToTopIcon /></button>
        <button type="button" aria-label="Zum Ende" className="ml-[10px]"><ToBottomIcon /></button>
      </div>
      <div className="flex flex-1 items-center pb-[4px] pl-[14px] pr-[28px] text-[14px] leading-5">
        <button type="button" className="flex items-center text-left">
          <svg width="36" height="36" viewBox="0 0 36 36" fill="#fff" stroke="#aaa" strokeWidth="1.600">
            <circle cx="18" cy="18" r="17" />
            <path d="M12 18h2M17 18h2M22 18h2" stroke="#222" strokeWidth="2" />
          </svg>
          <span>
            <u>Z</u>usatz-
            <br />
            funktionen
          </span>
        </button>
        <button type="button" aria-label="Zusatzfunktionen öffnen" className="-ml-[3px] mb-[20px]">
          <svg width="11" height="7" viewBox="0 0 11 7"><path d="M0 0h11L5.500 7z" /></svg>
        </button>
        <button type="button" className="ml-auto flex items-center font-bold">
          <svg width="36" height="36" viewBox="0 0 36 36" fill="#fff" stroke="#aaa" strokeWidth="1.600">
            <circle cx="18" cy="18" r="17" />
            <path d="M10 19l5 6 11-13" fill="none" stroke="#000" strokeWidth="2.400" />
          </svg>
          <span className="-ml-[4px]"><u>Ü</u>bernehmen</span>
        </button>
        <button type="button" className="ml-[47px] flex items-center">
          <svg width="36" height="36" viewBox="0 0 36 36" fill="none">
            <circle cx="18" cy="18" r="18" fill="#e03a16" />
            <path d="M13 13l10 10M23 13L13 23" stroke="#fff" strokeWidth="2.400" />
          </svg>
          <span className="-ml-[3px]"><u>A</u>bbrechen</span>
        </button>
      </div>
    </div>
  );
}

export default function App() {
  return (
    <div className={clsx("relative flex min-h-screen flex-col bg-[#bfd0f8] text-black", UI_FONT)}>
      <TitleBar />
      <Toolbar />
      <QsoForm />
      <RegionInfo />
      <main className="flex flex-1 gap-[11px] pb-[3px] pl-[3px] pr-[4px] pt-[9px]">
        <Logbook />
        <Statistics />
      </main>
      <AreaDialog />
    </div>
  );
}
